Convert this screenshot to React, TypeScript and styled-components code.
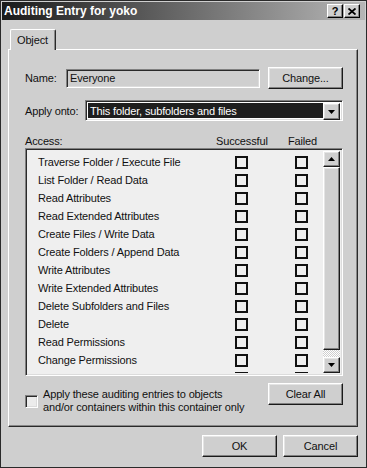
import React from 'react';
import styled, { createGlobalStyle } from 'styled-components';

const GlobalStyle = createGlobalStyle`
  html, body {
    margin: 0;
    padding: 0;
    background: #cfcfcf;
  }
`;

const FACE = '#cfcfcf';

const Window = styled.div`
  width: 367px;
  height: 468px;
  box-sizing: border-box;
  border: 1px solid #2a2a2a;
  padding: 1px;
  background: ${FACE};
  display: flex;
  flex-direction: column;
  font-family: "Liberation Sans", Arial, sans-serif;
  font-size: 11px;
  letter-spacing: -0.15px;
  color: #111;
`;

const TitleBar = styled.div`
  height: 18px;
  flex: 0 0 18px;
  display: flex;
  align-items: center;
  padding: 0 5px 0 2px;
  background: linear-gradient(to right, #1a1a1a 0%, #5a5a5a 40%, #b6b6b6 100%);
`;

const Title = styled.div`
  flex: 1;
  color: #fff;
  font-weight: bold;
  font-size: 12px;
  letter-spacing: 0;
`;

const CaptionButton = styled.div`
  width: 16px;
  height: 14px;
  box-sizing: border-box;
  margin-left: 1px;
  background: ${FACE};
  border: 1px solid;
  border-color: #fff #000 #000 #fff;
  box-shadow: inset -1px -1px 0 #808080;
  display: flex;
  align-items: center;
  justify-content: center;
  font-weight: bold;
  font-size: 11px;
  line-height: 1;
  color: #000;
`;

const Body = styled.div`
  flex: 1;
  display: flex;
  flex-direction: column;
  padding: 9px 7px 0 6px;
`;

const TabStrip = styled.div`
  display: flex;
  padding-left: 2px;
  height: 20px;
`;

const Tab = styled.div`
  position: relative;
  z-index: 1;
  height: 21px;
  box-sizing: border-box;
  padding: 0 7px 0 6px;
  background: ${FACE};
  border: 1px solid;
  border-bottom: none;
  border-color: #fff #2a2a2a #fff #fff;
  border-radius: 2px 2px 0 0;
  box-shadow: inset -1px 0 0 #888;
  display: flex;
  align-items: center;
`;

const Panel = styled.div`
  flex: 1;
  box-sizing: border-box;
  border: 1px solid;
  border-color: #fff #2a2a2a #2a2a2a #fff;
  box-shadow: inset -1px -1px 0 #888;
  padding: 17px 14px 0 16px;
  display: flex;
  flex-direction: column;
`;

const FieldRow = styled.div<{ $top?: number }>`
  display: flex;
  align-items: center;
  margin-top: ${(p) => p.$top ?? 0}px;
`;

const Label = styled.div<{ $w: number }>`
  width: ${(p) => p.$w}px;
  flex: 0 0 ${(p) => p.$w}px;
`;

const Sunken = styled.div`
  box-sizing: border-box;
  border: 1px solid;
  border-color: #808080 #fff #fff #808080;
  box-shadow: inset 1px 1px 0 #2a2a2a, inset -1px -1px 0 #dcdcdc;
`;

const TextField = styled(Sunken)`
  width: 194px;
  height: 19px;
  padding: 0 3px;
  display: flex;
  align-items: center;
  background: ${FACE};
`;

const Button = styled.div<{ $w?: number; $h?: number }>`
  width: ${(p) => p.$w ?? 75}px;
  height: ${(p) => p.$h ?? 22}px;
  box-sizing: border-box;
  background: ${FACE};
  border: 1px solid;
  border-color: #fff #1a1a1a #1a1a1a #fff;
  box-shadow: inset -1px -1px 0 #808080, inset 1px 1px 0 #e4e4e4;
  display: flex;
  align-items: center;
  justify-content: center;
  flex-shrink: 0;
`;

const Combo = styled(Sunken)`
  width: 258px;
  height: 21px;
  padding: 2px;
  display: flex;
  background: #fff;
`;

const ComboValue = styled.div`
  flex: 1;
  background: #1e1e1e;
  color: #fff;
  display: flex;
  align-items: center;
  padding-left: 2px;
`;

const AccessHeader = styled.div`
  display: grid;
  grid-template-columns: 191px 72px auto;
  margin-top: 14px;
  height: 13px;
  line-height: 13px;
`;

const ListBox = styled(Sunken)`
  height: 228px;
  display: flex;
  padding: 2px;
  background: #efefef;
`;

const Rows = styled.div`
  flex: 1;
  overflow: hidden;
  padding-top: 2px;
`;

const Row = styled.div`
  display: grid;
  grid-template-columns: 197px 60px 60px;
  align-items: center;
  height: 18px;
  padding-left: 10px;
  white-space: nowrap;
`;

const Check = styled.div`
  width: 13px;
  height: 13px;
  box-sizing: border-box;
  border: 2px solid #111;
  background: #efefef;
`;

const ScrollBar = styled.div`
  width: 17px;
  display: flex;
  flex-direction: column;
  background-color: #e6e6e6;
  background-image: repeating-conic-gradient(#ffffff 0 25%, #cfcfcf 0 50%);
  background-size: 2px 2px;
`;

const Track = styled.div`
  flex: 1;
`;

const BottomRow = styled.div`
  display: flex;
  justify-content: space-between;
  align-items: flex-start;
  margin-top: 7px;
`;

const CheckOption = styled.div`
  display: flex;
  align-items: center;
  gap: 5px;
  margin-top: 5px;
  line-height: 13px;
  white-space: nowrap;
`;

const SunkenCheck = styled(Sunken)`
  width: 13px;
  height: 13px;
  flex: 0 0 13px;
  background: #ececec;
`;

const Footer = styled.div`
  display: flex;
  justify-content: flex-end;
  gap: 6px;
  padding: 8px 0 9px;
`;

const Triangle = ({ up }: { up?: boolean }) => (
  <svg width="7" height="4" viewBox="0 0 7 4">
    <path d={up ? 'M3.5 0 L7 4 L0 4 Z' : 'M0 0 L7 0 L3.5 4 Z'} fill="#000" />
  </svg>
);

const rights = [
  'Traverse Folder / Execute File',
  'List Folder / Read Data',
  'Read Attributes',
  'Read Extended Attributes',
  'Create Files / Write Data',
  'Create Folders / Append Data',
  'Write Attributes',
  'Write Extended Attributes',
  'Delete Subfolders and Files',
  'Delete',
  'Read Permissions',
  'Change Permissions',
  'Take Ownership',
];

const App: React.FC = () => {
  return (
    <>
      <GlobalStyle />
      <Window>
        <TitleBar>
          <Title>Auditing Entry for yoko</Title>
          <CaptionButton>?</CaptionButton>
          <CaptionButton>
            <svg width="8" height="7" viewBox="0 0 8 7">
              <path d="M0.5 0.5 L7.5 6.5 M7.5 0.5 L0.5 6.5" stroke="#000" strokeWidth="1.8" />
            </svg>
          </CaptionButton>
        </TitleBar>
        <Body>
          <TabStrip>
            <Tab>Object</Tab>
          </TabStrip>
          <Panel>
            <FieldRow>
              <Label $w={41}>Name:</Label>
              <TextField>Everyone</TextField>
              <div style={{ flex: 1 }} />
              <Button>Change...</Button>
            </FieldRow>
            <FieldRow $top={11}>
              <Label $w={60}>Apply onto:</Label>
              <Combo>
                <ComboValue>This folder, subfolders and files</ComboValue>
                <Button $w={17} $h={17}>
                  <Triangle />
                </Button>
              </Combo>
            </FieldRow>
            <AccessHeader>
              <span>Access:</span>
              <span>Successful</span>
              <span>Failed</span>
            </AccessHeader>
            <ListBox>
              <Rows>
                {rights.map((r) => (
                  <Row key={r}>
                    <span>{r}</span>
                    <Check />
                    <Check />
                  </Row>
                ))}
              </Rows>
              <ScrollBar>
                <Button $w={17} $h={16}>
                  <Triangle up />
                </Button>
                <Button $w={17} $h={183} />
                <Track />
                <Button $w={17} $h={16}>
                  <Triangle />
                </Button>
              </ScrollBar>
            </ListBox>
            <BottomRow>
              <CheckOption>
                <SunkenCheck />
                <span>
                  Apply these auditing entries to objects
                  <br />
                  and/or containers within this container only
                </span>
              </CheckOption>
              <Button>Clear All</Button>
            </BottomRow>
          </Panel>
          <Footer>
            <Button>OK</Button>
            <Button>Cancel</Button>
          </Footer>
        </Body>
      </Window>
    </>
  );
};

export default App;
